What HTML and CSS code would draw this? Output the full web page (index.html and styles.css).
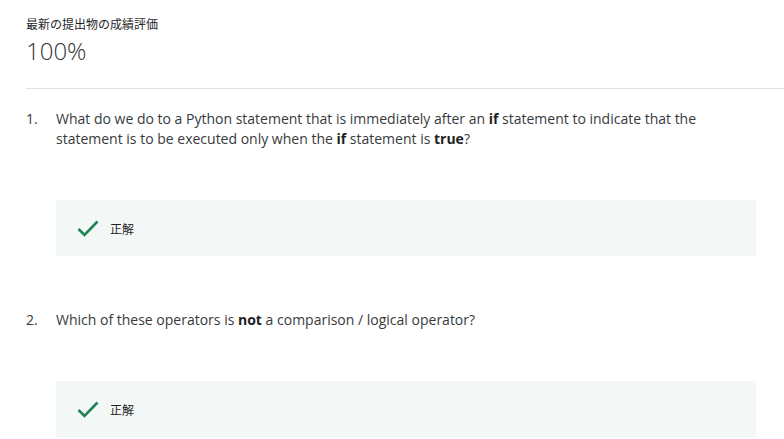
FILE: index.html
```html
<!DOCTYPE html>
<html lang="ja">
<head>
<meta charset="utf-8">
<link rel="stylesheet" href="styles.css">
</head>
<body>
<div class="page">
  <header class="grade">
    <div class="grade-label">最新の提出物の成績評価</div>
    <div class="grade-value">100%</div>
  </header>
  <div class="questions">
    <section class="question">
      <div class="q-row">
        <span class="q-num">1.</span>
        <p class="q-text">What do we do to a Python statement that is immediately after an <b>if</b> statement to indicate that the statement is to be executed only when the <b>if</b> statement is <b>true</b>?</p>
      </div>
      <div class="feedback">
        <svg class="check" width="22" height="17" viewBox="0 0 22 17"><path d="M1.5 9 L7.5 15 L20.5 1.5" fill="none" stroke="#1f8354" stroke-width="2.6"/></svg>
        <span class="fb-text">正解</span>
      </div>
    </section>
    <section class="question">
      <div class="q-row">
        <span class="q-num">2.</span>
        <p class="q-text">Which of these operators is <b>not</b> a comparison / logical operator?</p>
      </div>
      <div class="feedback">
        <svg class="check" width="22" height="17" viewBox="0 0 22 17"><path d="M1.5 9 L7.5 15 L20.5 1.5" fill="none" stroke="#1f8354" stroke-width="2.6"/></svg>
        <span class="fb-text">正解</span>
      </div>
    </section>
  </div>
</div>
</body>
</html>
```

FILE: styles.css
```css
html, body {
  margin: 0;
  padding: 0;
  background: #fff;
}
body {
  font-family: "Open Sans", "Noto Sans CJK JP", sans-serif;
  color: #333;
}
.page {
  padding-left: 26px;
}
.grade {
  padding-top: 16px;
  border-bottom: 1px solid #e1e1e1;
  height: 89px;
  box-sizing: border-box;
}
.grade-label {
  font-size: 12px;
  line-height: 16px;
  color: #1f1f1f;
  font-family: "Noto Sans CJK JP", sans-serif;
}
.grade-value {
  margin-top: 4px;
  font-size: 24px;
  line-height: 30px;
  font-weight: 300;
  color: #333;
}
.questions {
  padding-right: 28px;
  padding-top: 20px;
}
.question {
  margin-bottom: 54px;
}
.q-row {
  display: flex;
  font-size: 14px;
  line-height: 20px;
  color: #373a3c;
}
.q-num {
  width: 30px;
  flex: none;
}
.q-text {
  margin: 0;
  padding-right: 40px;
}
.q-text b {
  font-weight: 700;
  color: #1f1f1f;
}
.feedback {
  margin-top: 51px;
  margin-left: 30px;
  height: 56px;
  background: #f3f8f6;
  display: flex;
  align-items: center;
  padding-left: 21px;
}
.check {
  display: block;
  margin-top: 1px;
}
.fb-text {
  margin-left: 11px;
  font-size: 12px;
  font-family: "Noto Sans CJK JP", sans-serif;
  color: #1f1f1f;
}
```
